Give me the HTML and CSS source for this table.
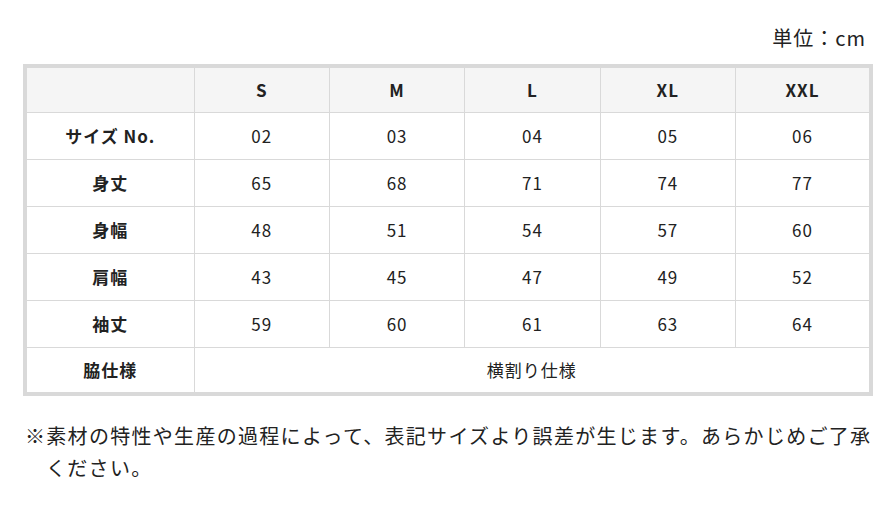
FILE: index.html
```html
<!DOCTYPE html>
<html lang="ja">
<head>
<meta charset="utf-8">
<link rel="stylesheet" href="styles.css">
</head>
<body>
<div class="wrap">
  <p class="unit">単位：cm</p>
  <table class="size">
    <colgroup>
      <col class="c-head">
      <col><col><col><col><col>
    </colgroup>
    <thead>
      <tr><th></th><th>S</th><th>M</th><th>L</th><th>XL</th><th>XXL</th></tr>
    </thead>
    <tbody>
      <tr><th>サイズ No.</th><td>02</td><td>03</td><td>04</td><td>05</td><td>06</td></tr>
      <tr><th>身丈</th><td>65</td><td>68</td><td>71</td><td>74</td><td>77</td></tr>
      <tr><th>身幅</th><td>48</td><td>51</td><td>54</td><td>57</td><td>60</td></tr>
      <tr><th>肩幅</th><td>43</td><td>45</td><td>47</td><td>49</td><td>52</td></tr>
      <tr><th>袖丈</th><td>59</td><td>60</td><td>61</td><td>63</td><td>64</td></tr>
      <tr><th>脇仕様</th><td colspan="5">横割り仕様</td></tr>
    </tbody>
  </table>
  <p class="note">※素材の特性や生産の過程によって、表記サイズより誤差が生じます。あらかじめご了承ください。</p>
</div>
</body>
</html>
```
FILE: styles.css
```css
html, body {
  margin: 0;
  padding: 0;
  background: #fff;
}
body {
  font-family: "Noto Sans CJK JP", "Noto Sans", sans-serif;
  color: #222;
}
.wrap {
  width: 850px;
  margin-left: 23px;
}
.unit {
  margin: 0;
  padding: 25px 7px 13px 0;
  text-align: right;
  font-size: 20px;
  line-height: 26px;
  letter-spacing: 1px;
}
.size {
  width: 850px;
  border-collapse: collapse;
  border: 4px solid #d9d9d9;
  table-layout: fixed;
  font-size: 17px;
  letter-spacing: 1px;
}
.size col.c-head {
  width: 169px;
}
.size th, .size td {
  border: 1px solid #d9d9d9;
  height: 47px;
  padding: 0;
  text-align: center;
  vertical-align: middle;
  box-sizing: border-box;
}
.size thead th {
  background: #f5f5f5;
  font-weight: 700;
  height: 46px;
}
.size tbody th {
  font-weight: 700;
}
.size td {
  font-weight: 400;
}
.note {
  margin: 24px 0 0 2px;
  font-size: 20px;
  line-height: 32px;
  letter-spacing: 1.3px;
  padding-left: 21px;
  text-indent: -21px;
}
```
